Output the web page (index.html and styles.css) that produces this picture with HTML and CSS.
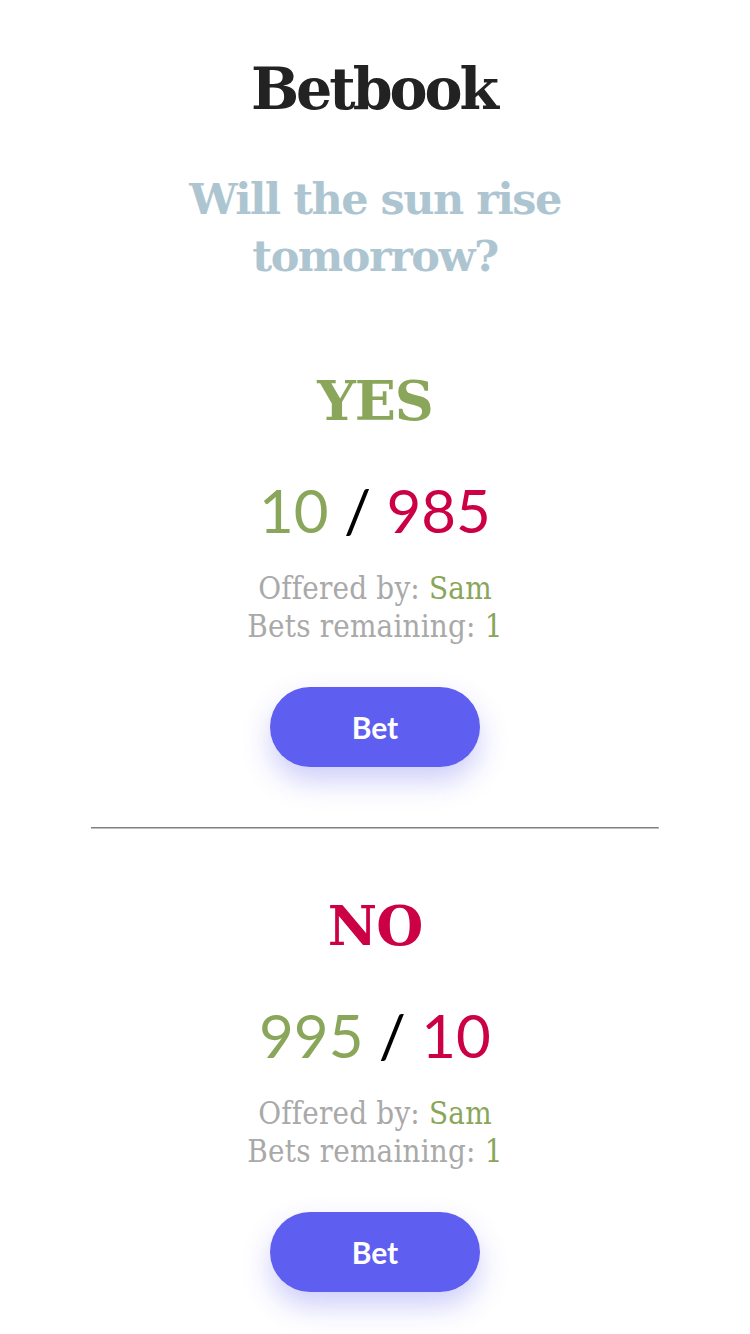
FILE: index.html
```html
<!DOCTYPE html>
<html lang="en">
<head>
<meta charset="utf-8">
<title>Betbook</title>
<link rel="stylesheet" href="styles.css">
</head>
<body>
<main class="page">
  <h1 class="title">Betbook</h1>
  <h2 class="question">Will the sun rise<br>tomorrow?</h2>

  <section class="offer">
    <h3 class="side side-yes">YES</h3>
    <div class="odds"><span class="win">10</span> / <span class="lose">985</span></div>
    <div class="meta">
      <div>Offered by: <span class="hl">Sam</span></div>
      <div>Bets remaining: <span class="hl">1</span></div>
    </div>
    <button class="bet">Bet</button>
  </section>

  <hr class="divider">

  <section class="offer">
    <h3 class="side side-no">NO</h3>
    <div class="odds"><span class="win">995</span> / <span class="lose">10</span></div>
    <div class="meta">
      <div>Offered by: <span class="hl">Sam</span></div>
      <div>Bets remaining: <span class="hl">1</span></div>
    </div>
    <button class="bet">Bet</button>
  </section>
</main>
</body>
</html>
```

FILE: styles.css
```css
html, body {
  margin: 0;
  padding: 0;
  background: #ffffff;
}

.page {
  display: flex;
  flex-direction: column;
  align-items: center;
  text-align: center;
  padding-top: 53px;
  padding-bottom: 40px;
  font-family: "DejaVu Serif", "Liberation Serif", serif;
}

.title {
  margin: 0;
  font-size: 57px;
  line-height: 72px;
  font-weight: bold;
  color: #222222;
  letter-spacing: -3px;
  text-indent: -3px;
}

.question {
  margin: 46px 0 0;
  font-size: 43px;
  line-height: 57px;
  font-weight: bold;
  color: #adc5d0;
  letter-spacing: -1.5px;
}

.offer {
  display: flex;
  flex-direction: column;
  align-items: center;
}

.page > .offer:first-of-type {
  margin-top: 84px;
}

.side {
  margin: 0;
  font-size: 54px;
  line-height: 64px;
  font-weight: bold;
  letter-spacing: -1px;
}

.side-yes { color: #8aa65a; }
.side-no { color: #cc0044; }

.odds {
  margin-top: 41px;
  font-family: "Lato", "Liberation Sans", sans-serif;
  font-size: 60px;
  line-height: 72px;
  color: #000000;
}

.win { color: #8aa65a; }
.lose { color: #cc0044; }

.meta {
  margin-top: 23px;
  font-size: 31px;
  line-height: 38px;
  color: #a9a9a9;
  font-stretch: condensed;
  letter-spacing: 0.2px;
}

.hl { color: #8aa65a; }

.bet {
  margin-top: 42px;
  width: 210px;
  height: 80px;
  border: none;
  border-radius: 40px;
  background: #5e5ef0;
  color: #ffffff;
  font-family: "Lato", "Liberation Sans", sans-serif;
  font-size: 30px;
  font-weight: bold;
  box-shadow: 0 14px 28px rgba(94, 94, 240, 0.3);
  cursor: pointer;
}

.divider {
  box-sizing: border-box;
  width: 568px;
  height: 2px;
  margin: 60px 0 65px;
  border-style: solid;
  border-width: 1px 1px 1px 0;
  border-color: #808080 #c0c0c0 #c0c0c0 #808080;
}
```
